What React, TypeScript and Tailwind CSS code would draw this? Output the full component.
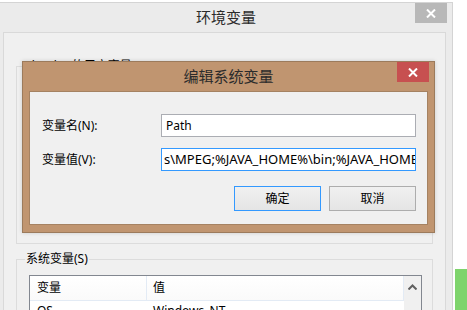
const ui = "font-['Noto_Sans','Noto_Sans_CJK_SC',sans-serif]";

function CloseGlyph() {
  return (
    <svg width="10" height="9" viewBox="0 0 10 9" className="block">
      <path d="M1 0.5L9 8.5M9 0.5L1 8.5" stroke="#fff" strokeWidth="2" />
    </svg>
  );
}

function EditDialog() {
  return (
    <div className="absolute left-[22px] top-[61px] w-[413px] h-[172px] border border-[#9c7b5c] bg-[#c09570] flex flex-col shadow-[0_0_4px_rgba(0,0,0,0.15)]">
      {/* Title bar */}
      <div className="relative h-[29px] shrink-0 flex items-center justify-center">
        <span className="text-[15px] text-[#2b2b2b] leading-none">编辑系统变量</span>
        <button className="absolute right-[5px] top-0 w-[32px] h-[20px] bg-[#c75050] flex items-center justify-center">
          <CloseGlyph />
        </button>
      </div>
      {/* Client */}
      <div className="mx-[6px] mb-[7px] flex-1 border border-[#a58262] bg-[#f0f0f0] pt-[22px] pl-[12px] text-[12px] text-black">
        <div className="flex items-center h-[23px]">
          <span className="w-[119px]">变量名(N):</span>
          <div className="w-[255px] h-[23px] border border-[#abadb3] bg-white pl-[4px] flex items-center overflow-hidden">
            <span className="whitespace-nowrap">Path</span>
          </div>
        </div>
        <div className="flex items-center h-[23px] mt-[11px]">
          <span className="w-[119px]">变量值(V):</span>
          <div className="w-[255px] h-[23px] border border-[#3399ff] bg-white pl-[2px] flex items-center overflow-hidden">
            <span className="whitespace-nowrap text-[13px]">s\MPEG;%JAVA_HOME%\bin;%JAVA_HOME%\jre\bin</span>
          </div>
        </div>
        <div className="flex gap-[8px] mt-[15px] pl-[192px]">
          <button className="w-[87px] h-[25px] border border-[#3399ff] bg-linear-to-b from-[#f0f0f0] to-[#e5e5e5] text-[12px]">
            确定
          </button>
          <button className="w-[87px] h-[25px] border border-[#adadad] bg-linear-to-b from-[#f0f0f0] to-[#e5e5e5] text-[12px]">
            取消
          </button>
        </div>
      </div>
    </div>
  );
}

export default function App() {
  return (
    <div className={`relative w-[467px] h-[310px] overflow-hidden bg-white ${ui}`}>
      {/* 环境变量 window */}
      <div className="mt-[2px] w-[453px] h-[308px] border-t border-r border-[#d4d4d4] bg-[#ebebeb] flex flex-col">
        <div className="relative h-[29px] shrink-0 flex items-center justify-center">
          <span className="text-[15px] text-[#2b2b2b] leading-none">环境变量</span>
          <button className="absolute right-[5px] top-0 w-[32px] h-[20px] bg-[#b8b8b8] flex items-center justify-center">
            <CloseGlyph />
          </button>
        </div>
        <div className="ml-[3px] w-[443px] flex-1 border-x border-t border-[#d9d9d9] bg-[#f0f0f0] pl-[12px] text-[12px] text-black">
          <fieldset className="mt-[25px] w-[417px] h-[186px] border border-[#dcdcdc] px-[8px]">
            <legend className="leading-[16px] px-[1px]">zhouhn 的用户变量(U)</legend>
          </fieldset>
          <fieldset className="mt-[7px] w-[417px] h-[80px] border border-[#dcdcdc] px-[8px]">
            <legend className="leading-[16px] px-[1px]">系统变量(S)</legend>
            <div className="ml-[4px] mt-[8px] w-[393px] h-[60px] border border-[#828790] bg-white flex">
              <div className="flex-1 flex flex-col">
                <div className="h-[25px] flex border-b border-r border-[#e3ebf5] bg-linear-to-b from-white to-[#fafafa]">
                  <div className="w-[117px] border-r border-[#e3ebf5] pl-[7px] flex items-center">变量</div>
                  <div className="pl-[6px] flex items-center">值</div>
                </div>
                <div className="h-[20px] flex items-center">
                  <div className="w-[117px] pl-[7px]">OS</div>
                  <div className="pl-[6px]">Windows_NT</div>
                </div>
              </div>
              <div className="w-[17px] bg-[#f0f0f0] flex justify-center pt-[8px]">
                <svg width="9" height="6" viewBox="0 0 9 6">
                  <path d="M0.5 5.5L4.5 1.5L8.5 5.5" fill="none" stroke="#606060" strokeWidth="2" />
                </svg>
              </div>
            </div>
          </fieldset>
        </div>
      </div>
      {/* edge of another window on the desktop */}
      <div className="absolute left-[455px] top-[269px] w-[12px] h-[41px] bg-[#7ed46c]" />
      <EditDialog />
    </div>
  );
}
